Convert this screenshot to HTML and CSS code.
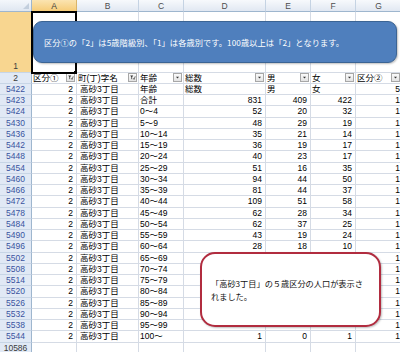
FILE: index.html
```html
<!DOCTYPE html>
<html lang="ja">
<head>
<meta charset="utf-8">
<link rel="stylesheet" href="styles.css">
</head>
<body>
<div class="sheet">
  <div class="grid">
    <div class="corner"><span class="tri"></span></div>
    <div class="ch sel">A</div><div class="ch">B</div><div class="ch">C</div><div class="ch">D</div><div class="ch">E</div><div class="ch">F</div><div class="ch">G</div>

    <div class="rh r1">1</div>
    <div class="c a1"></div><div class="c"></div><div class="c"></div><div class="c"></div><div class="c"></div><div class="c"></div><div class="c"></div>

    <div class="rh plain">2</div>
    <div class="c hd"><span>区分①</span><span class="btn on"><svg viewBox="0 0 9 9"><path d="M1.5 2h4l-1.5 2v3l-1 -1v-2z" fill="#333"/><path d="M5.5 5.5l1 1.5l1.5 -4" fill="none" stroke="#333" stroke-width="0.9"/></svg></span></div>
    <div class="c hd"><span>町(丁)字名</span><span class="btn on"><svg viewBox="0 0 9 9"><path d="M1.5 2h4l-1.5 2v3l-1 -1v-2z" fill="#333"/><path d="M5.5 5.5l1 1.5l1.5 -4" fill="none" stroke="#333" stroke-width="0.9"/></svg></span></div>
    <div class="c hd"><span>年齢</span><span class="btn"><svg viewBox="0 0 9 9"><path d="M2.5 3.5h4l-2 2.2z" fill="#333"/></svg></span></div>
    <div class="c hd"><span>総数</span><span class="btn"><svg viewBox="0 0 9 9"><path d="M2.5 3.5h4l-2 2.2z" fill="#333"/></svg></span></div>
    <div class="c hd"><span>男</span><span class="btn"><svg viewBox="0 0 9 9"><path d="M2.5 3.5h4l-2 2.2z" fill="#333"/></svg></span></div>
    <div class="c hd"><span>女</span><span class="btn"><svg viewBox="0 0 9 9"><path d="M2.5 3.5h4l-2 2.2z" fill="#333"/></svg></span></div>
    <div class="c hd"><span>区分②</span><span class="btn"><svg viewBox="0 0 9 9"><path d="M2.5 3.5h4l-2 2.2z" fill="#333"/></svg></span></div>

    <div class="rh">5422</div><div class="c n">2</div><div class="c t">高砂3丁目</div><div class="c s">年齢</div><div class="c s">総数</div><div class="c s">男</div><div class="c s">女</div><div class="c n g">5</div>
    <div class="rh">5423</div><div class="c n">2</div><div class="c t">高砂3丁目</div><div class="c s">合計</div><div class="c n">831</div><div class="c n">409</div><div class="c n">422</div><div class="c n g">1</div>
    <div class="rh">5424</div><div class="c n">2</div><div class="c t">高砂3丁目</div><div class="c s">0～4</div><div class="c n">52</div><div class="c n">20</div><div class="c n">32</div><div class="c n g">1</div>
    <div class="rh">5430</div><div class="c n">2</div><div class="c t">高砂3丁目</div><div class="c s">5～9</div><div class="c n">48</div><div class="c n">29</div><div class="c n">19</div><div class="c n g">1</div>
    <div class="rh">5436</div><div class="c n">2</div><div class="c t">高砂3丁目</div><div class="c s">10～14</div><div class="c n">35</div><div class="c n">21</div><div class="c n">14</div><div class="c n g">1</div>
    <div class="rh">5442</div><div class="c n">2</div><div class="c t">高砂3丁目</div><div class="c s">15～19</div><div class="c n">36</div><div class="c n">19</div><div class="c n">17</div><div class="c n g">1</div>
    <div class="rh">5448</div><div class="c n">2</div><div class="c t">高砂3丁目</div><div class="c s">20～24</div><div class="c n">40</div><div class="c n">23</div><div class="c n">17</div><div class="c n g">1</div>
    <div class="rh">5454</div><div class="c n">2</div><div class="c t">高砂3丁目</div><div class="c s">25～29</div><div class="c n">51</div><div class="c n">16</div><div class="c n">35</div><div class="c n g">1</div>
    <div class="rh">5460</div><div class="c n">2</div><div class="c t">高砂3丁目</div><div class="c s">30～34</div><div class="c n">94</div><div class="c n">44</div><div class="c n">50</div><div class="c n g">1</div>
    <div class="rh">5466</div><div class="c n">2</div><div class="c t">高砂3丁目</div><div class="c s">35～39</div><div class="c n">81</div><div class="c n">44</div><div class="c n">37</div><div class="c n g">1</div>
    <div class="rh">5472</div><div class="c n">2</div><div class="c t">高砂3丁目</div><div class="c s">40～44</div><div class="c n">109</div><div class="c n">51</div><div class="c n">58</div><div class="c n g">1</div>
    <div class="rh">5478</div><div class="c n">2</div><div class="c t">高砂3丁目</div><div class="c s">45～49</div><div class="c n">62</div><div class="c n">28</div><div class="c n">34</div><div class="c n g">1</div>
    <div class="rh">5484</div><div class="c n">2</div><div class="c t">高砂3丁目</div><div class="c s">50～54</div><div class="c n">62</div><div class="c n">37</div><div class="c n">25</div><div class="c n g">1</div>
    <div class="rh">5490</div><div class="c n">2</div><div class="c t">高砂3丁目</div><div class="c s">55～59</div><div class="c n">43</div><div class="c n">19</div><div class="c n">24</div><div class="c n g">1</div>
    <div class="rh">5496</div><div class="c n">2</div><div class="c t">高砂3丁目</div><div class="c s">60～64</div><div class="c n">28</div><div class="c n">18</div><div class="c n">10</div><div class="c n g">1</div>
    <div class="rh">5502</div><div class="c n">2</div><div class="c t">高砂3丁目</div><div class="c s">65～69</div><div class="c"></div><div class="c"></div><div class="c"></div><div class="c n g">1</div>
    <div class="rh">5508</div><div class="c n">2</div><div class="c t">高砂3丁目</div><div class="c s">70～74</div><div class="c"></div><div class="c"></div><div class="c"></div><div class="c n g">1</div>
    <div class="rh">5514</div><div class="c n">2</div><div class="c t">高砂3丁目</div><div class="c s">75～79</div><div class="c"></div><div class="c"></div><div class="c"></div><div class="c n g">1</div>
    <div class="rh">5520</div><div class="c n">2</div><div class="c t">高砂3丁目</div><div class="c s">80～84</div><div class="c"></div><div class="c"></div><div class="c"></div><div class="c n g">1</div>
    <div class="rh">5526</div><div class="c n">2</div><div class="c t">高砂3丁目</div><div class="c s">85～89</div><div class="c"></div><div class="c"></div><div class="c"></div><div class="c n g">1</div>
    <div class="rh">5532</div><div class="c n">2</div><div class="c t">高砂3丁目</div><div class="c s">90～94</div><div class="c"></div><div class="c"></div><div class="c"></div><div class="c n g">1</div>
    <div class="rh">5538</div><div class="c n">2</div><div class="c t">高砂3丁目</div><div class="c s">95～99</div><div class="c"></div><div class="c"></div><div class="c"></div><div class="c n g">1</div>
    <div class="rh">5544</div><div class="c n">2</div><div class="c t">高砂3丁目</div><div class="c s">100～</div><div class="c n">1</div><div class="c n">0</div><div class="c n">1</div><div class="c n g">1</div>
    <div class="rh plain">10586</div><div class="c"></div><div class="c"></div><div class="c"></div><div class="c"></div><div class="c"></div><div class="c"></div><div class="c"></div>
  </div>

  <div class="callout blue">区分①の「2」は5歳階級別、「1」は各歳別です。100歳以上は「2」となります。</div>
  <div class="callout red">「高砂3丁目」の５歳区分の人口が表示さ<br>れました。</div>
</div>
</body>
</html>
```

FILE: styles.css
```css
html, body {
  margin: 0;
  padding: 0;
  background: #ffffff;
  overflow: hidden;
}

.sheet {
  position: relative;
  width: 400px;
  height: 352px;
  overflow: hidden;
  font-family: "Liberation Sans", "Noto Sans CJK JP", sans-serif;
  font-size: 8.5px;
  color: #000;
}

.grid {
  display: grid;
  grid-template-columns: 32px 45px 62px 45px 82px 45px 45px 46px;
  grid-template-rows: 12px 60.5px;
  grid-auto-rows: 11.25px;
}

.corner {
  position: relative;
  background: linear-gradient(#f4f7fb, #dfe7f1);
  border-right: 1px solid #9eb6ce;
  border-bottom: 1px solid #9eb6ce;
  box-sizing: border-box;
}
.corner .tri {
  position: absolute;
  right: 2px;
  bottom: 2px;
  width: 0;
  height: 0;
  border-left: 6px solid transparent;
  border-bottom: 6px solid #c3cfdd;
}

.ch {
  display: flex;
  align-items: center;
  justify-content: center;
  background: linear-gradient(#f7f9fc, #e1e8f2);
  border-right: 1px solid #c5d3e3;
  border-bottom: 1px solid #9eb6ce;
  box-sizing: border-box;
  color: #4d4d4d;
  font-size: 8.5px;
}
.ch.sel {
  background: linear-gradient(#fbe4b1, #f6cc78);
  border-right-color: #d9b46a;
  color: #3b3b3b;
}

.rh {
  display: flex;
  align-items: center;
  justify-content: center;
  background: #e1e9f5;
  border-right: 1px solid #9eb6ce;
  border-bottom: 1px solid #c7d5e6;
  box-sizing: border-box;
  color: #3954a0;
  font-size: 8.5px;
}
.rh.plain {
  color: #3a3a3a;
}
.rh.r1 {
  align-items: flex-end;
  padding-bottom: 1px;
  background: #f8d690;
  border-right-color: #d7b36c;
  color: #3b3b3b;
}

.c {
  display: flex;
  align-items: center;
  border-right: 1px solid #d5dbe5;
  border-bottom: 1px solid #d5dbe5;
  box-sizing: border-box;
  white-space: nowrap;
  overflow: hidden;
  line-height: 10px;
}
.c.n {
  justify-content: flex-end;
  padding-right: 3px;
}
.c.g {
  padding-right: 1px;
  overflow: visible;
}
.c.t {
  padding-left: 3px;
}
.c.s {
  padding-left: 1px;
}
.c.hd {
  justify-content: space-between;
  padding-left: 1px;
  padding-right: 1px;
}
.c.a1 {
  position: relative;
  border: 2px solid #000;
  margin: -1px 0 -1px -1px;
  z-index: 1;
}
.c.a1::after {
  content: "";
  position: absolute;
  right: -4px;
  bottom: -4px;
  width: 4px;
  height: 4px;
  background: #000;
  border: 1px solid #fff;
}

.btn {
  display: block;
  width: 9px;
  height: 9px;
  box-sizing: border-box;
  border: 1px solid #a7a7a7;
  background: linear-gradient(#fbfbfb, #e3e3e3);
  flex: none;
}
.btn svg {
  display: block;
  width: 7px;
  height: 7px;
}

.callout {
  position: absolute;
  box-sizing: border-box;
  font-family: "Noto Sans CJK JP", sans-serif;
  font-size: 8.2px;
  z-index: 2;
}
.callout.blue {
  left: 33px;
  top: 21px;
  width: 364px;
  height: 42px;
  padding: 0 0 0 10px;
  display: flex;
  align-items: center;
  background: #4f7fbd;
  border: 1.5px solid #3b6494;
  border-radius: 9px;
  color: #ffffff;
  box-shadow: 1px 1px 2px rgba(0, 0, 0, 0.25);
  letter-spacing: 0.1px;
}
.callout.red {
  left: 200px;
  top: 252px;
  width: 181px;
  height: 75px;
  padding: 0 0 0 9px;
  display: flex;
  align-items: center;
  background: #ffffff;
  border: 2px solid #b12c3f;
  border-radius: 15px;
  color: #111;
  line-height: 13px;
  box-shadow: 1px 1px 2px rgba(0, 0, 0, 0.25);
}
```
